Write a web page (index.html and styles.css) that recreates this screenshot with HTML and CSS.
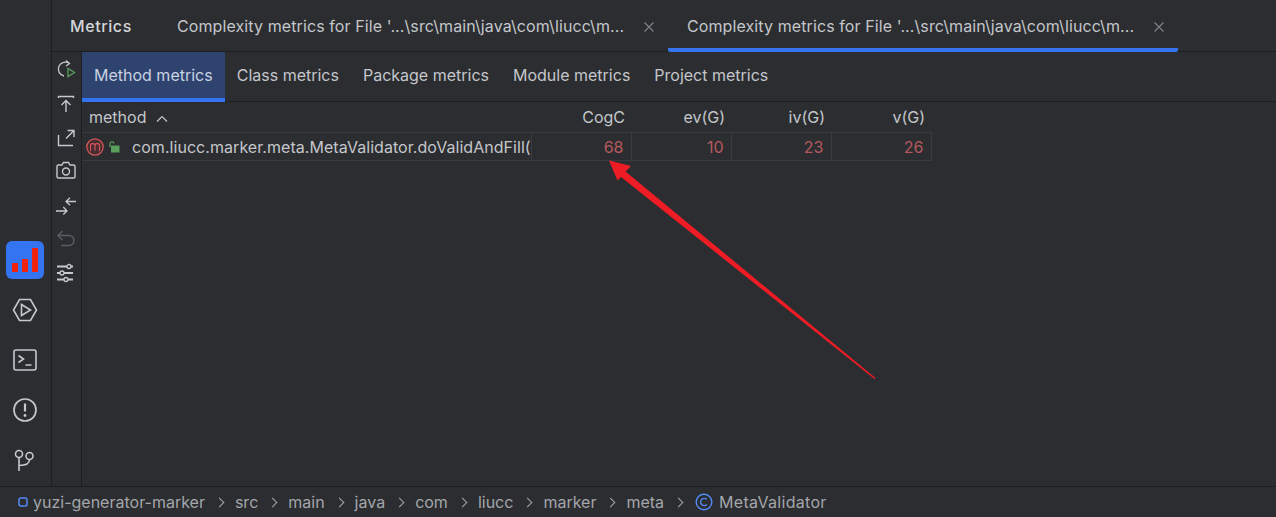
FILE: index.html
```html
<!DOCTYPE html>
<html lang="en">
<head>
<meta charset="utf-8">
<title>Metrics</title>
<link rel="stylesheet" href="styles.css">
</head>
<body>
<div class="main">
  <aside class="stripe">
    <div class="stripe-btn active">
      <svg width="38" height="38" viewBox="0 0 38 38"><rect x="6" y="22" width="6" height="9" fill="#f0230f"/><rect x="16" y="18" width="6" height="13" fill="#f0230f"/><rect x="26" y="7" width="6" height="24" fill="#f0230f"/></svg>
    </div>
    <div class="stripe-btn">
      <svg width="26" height="26" viewBox="0 0 26 26" class="ico"><path d="M7.500 2.500h11L24.500 13l-6 10.500h-11L1.500 13z" stroke-width="1.600"/><path d="M9.500 7.500v11l9-5.500z" stroke-width="1.600"/></svg>
    </div>
    <div class="stripe-btn">
      <svg width="26" height="26" viewBox="0 0 26 26" class="ico"><rect x="2" y="3" width="22" height="20" rx="2" stroke-width="1.600"/><path d="M6.500 8.500l5 3.500-5 3.500M13.500 18h6" stroke-width="1.600"/></svg>
    </div>
    <div class="stripe-btn">
      <svg width="26" height="26" viewBox="0 0 26 26" class="ico"><circle cx="13" cy="13" r="11" stroke-width="1.700"/><path d="M13 6.500v8" stroke-width="2.200"/><circle cx="13" cy="18.500" r="1.400" class="dot"/></svg>
    </div>
    <div class="stripe-btn">
      <svg width="26" height="26" viewBox="0 0 26 26" class="ico"><circle cx="7" cy="7" r="3.500" stroke-width="1.600"/><circle cx="17.500" cy="9" r="3.500" stroke-width="1.600"/><path d="M7 10.500V24M7 18.500c6 0 10.500-1 10.500-6" stroke-width="1.600"/></svg>
    </div>
  </aside>
  <section class="panel">
    <header class="tool-header">
      <div class="tool-title">Metrics</div>
      <div class="tool-tab">
        <span class="tool-tab-label">Complexity metrics for File '...\src\main\java\com\liucc\m...</span>
        <svg class="close" width="12" height="12" viewBox="0 0 12 12"><path d="M1.500 1.500l9 9M10.500 1.500l-9 9"/></svg>
      </div>
      <div class="tool-tab selected">
        <span class="tool-tab-label">Complexity metrics for File '...\src\main\java\com\liucc\m...</span>
        <svg class="close" width="12" height="12" viewBox="0 0 12 12"><path d="M1.500 1.500l9 9M10.500 1.500l-9 9"/></svg>
      </div>
    </header>
    <div class="panel-body">
      <nav class="toolbar">
        <svg width="22" height="22" viewBox="0 0 22 22" class="ico"><path d="M14.500 4.500A7 7 0 1 0 9 17M11 1.500l3.500 3-3.500 2.500" stroke-width="1.300"/><path d="M13 9.500v8l6.500-4z" stroke-width="1.300" class="green"/></svg>
        <svg width="22" height="22" viewBox="0 0 22 22" class="ico"><path d="M3.500 5V3.500h15V5M11 19V7.500M6.500 12l4.500-4.500 4.500 4.500" stroke-width="1.400"/></svg>
        <svg width="22" height="22" viewBox="0 0 22 22" class="ico"><path d="M3.500 8v10.500h14.500M11 11.500L19 3.500M12.500 3.500H19V10" stroke-width="1.400"/></svg>
        <svg width="22" height="22" viewBox="0 0 22 22" class="ico"><path d="M7 5l1.500-2.500h5L15 5h3.500a1.500 1.500 0 0 1 1.500 1.500v10a1.500 1.500 0 0 1-1.500 1.500h-15A1.500 1.500 0 0 1 2 16.500v-10A1.500 1.500 0 0 1 3.500 5z" stroke-width="1.400"/><circle cx="11" cy="11.500" r="3.500" stroke-width="1.400"/></svg>
        <svg width="22" height="22" viewBox="0 0 22 22" class="ico"><path d="M21 7.500H11M15 3.800L11 7.500l4 3.800M1 17h11M8.300 13l3.700 4-3.700 3.500" stroke-width="1.300"/></svg>
        <svg width="22" height="22" viewBox="0 0 22 22" class="ico dim"><path d="M7.500 3L3 7.500 7.500 12M3 7.500h11a5 5 0 0 1 0 10H6" stroke-width="1.400"/></svg>
        <svg width="22" height="22" viewBox="0 0 22 22" class="ico"><path d="M2 4.500h16M2 11h16M2 17.500h16" stroke-width="1.900"/><circle cx="14" cy="4.500" r="2" class="fillbg" stroke-width="1.300"/><circle cx="7" cy="11" r="2" class="fillbg" stroke-width="1.300"/><circle cx="11" cy="17.500" r="2" class="fillbg" stroke-width="1.300"/></svg>
      </nav>
      <div class="content">
        <div class="metric-tabs">
          <div class="metric-tab selected">Method metrics</div>
          <div class="metric-tab">Class metrics</div>
          <div class="metric-tab">Package metrics</div>
          <div class="metric-tab">Module metrics</div>
          <div class="metric-tab">Project metrics</div>
        </div>
        <table class="metrics">
          <thead>
            <tr>
              <th class="col-method">method <svg class="sort" width="14" height="9" viewBox="0 0 14 9"><path d="M2 7.500L7 2.500l5 5"/></svg></th>
              <th>CogC</th><th>ev(G)</th><th>iv(G)</th><th>v(G)</th>
            </tr>
          </thead>
          <tbody>
            <tr>
              <td class="col-method">
                <div class="method-cell">
                  <svg width="18" height="18" viewBox="0 0 18 18" class="m-icon"><circle cx="9" cy="9" r="8.200"/><path d="M4.500 13V7.500c0-2.500 4.500-2.500 4.500 0V12.500M9 7.500c0-2.500 4.500-2.500 4.500 0V13"/></svg>
                  <svg width="12" height="12" viewBox="0 0 12 12" class="lock"><rect x="3" y="4.500" width="8.500" height="7"/><path d="M2 6V2.800c0-2.500 3.500-2.500 4 -.3"/></svg>
                  <span class="method-name">com.liucc.marker.meta.MetaValidator.doValidAndFill(</span>
                </div>
              </td>
              <td class="num">68</td><td class="num">10</td><td class="num">23</td><td class="num">26</td>
            </tr>
          </tbody>
        </table>
      </div>
    </div>
  </section>
</div>
<footer class="crumbs">
  <svg width="10" height="10" viewBox="0 0 10 10" class="module"><rect x="1" y="1" width="8" height="8" rx="2"/></svg>
  <span>yuzi-generator-marker</span><i class="sep"></i>
  <span>src</span><i class="sep"></i>
  <span>main</span><i class="sep"></i>
  <span>java</span><i class="sep"></i>
  <span>com</span><i class="sep"></i>
  <span>liucc</span><i class="sep"></i>
  <span>marker</span><i class="sep"></i>
  <span>meta</span><i class="sep"></i>
  <svg width="18" height="18" viewBox="0 0 18 18" class="class-ico"><circle cx="9" cy="9" r="7.800"/><path d="M11.800 6.500a3.600 3.600 0 1 0 0 5"/></svg>
  <span class="class-name">MetaValidator</span>
</footer>
<svg class="arrow" width="1276" height="517" viewBox="0 0 1276 517"><polygon points="609,160.500 631,166 625.500,171.500 875.500,378 874.500,379 621,177 617.500,180.500"/></svg>
</body>
</html>
```

FILE: styles.css
```css
* { box-sizing: border-box; }
html, body { margin: 0; height: 100%; }
body {
  width: 1276px;
  height: 517px;
  overflow: hidden;
  background: #2b2d30;
  color: #c4c6cb;
  font-family: Inter, "Noto Sans", sans-serif;
  font-size: 16px;
  display: flex;
  flex-direction: column;
  position: relative;
}
.main { flex: 1; display: flex; min-height: 0; }
.ico { fill: none; stroke: #c6c8cd; }
.ico .dot { fill: #c6c8cd; stroke: none; }
.ico .green { stroke: #5c9e5e; }
.ico .fillbg { fill: #2b2d30; }
.ico.dim { stroke: #5a5d63; }

.stripe {
  width: 52px;
  border-right: 1px solid #1e1f22;
  display: flex;
  flex-direction: column;
  align-items: center;
  justify-content: flex-end;
  padding: 0 1px 7px 0;
  gap: 12px;
}
.stripe-btn {
  width: 38px;
  height: 38px;
  border-radius: 6px;
  display: flex;
  align-items: center;
  justify-content: center;
}
.stripe-btn.active { background: #3574f0; }

.panel { flex: 1; display: flex; flex-direction: column; min-width: 0; }
.tool-header {
  height: 52px;
  flex: none;
  display: flex;
  border-bottom: 1px solid #1e1f22;
}
.tool-title {
  width: 106px;
  padding: 16px 0 0 18px;
  font-weight: 500;
  color: #d5d7db;
  line-height: 20px;
  letter-spacing: .6px;
}
.tool-tab {
  width: 510px;
  display: flex;
  align-items: flex-start;
  padding: 16px 0 0 19px;
  gap: 16px;
  position: relative;
  line-height: 20px;
  margin-bottom: -1px;
}
.tool-tab-label { white-space: nowrap; width: 450px; overflow: hidden; letter-spacing: .1px; }
.close { fill: none; stroke: #7e8187; stroke-width: 1.200; margin-top: 5px; flex: none; }
.tool-tab.selected { border-bottom: 4px solid #3574f0; border-radius: 0 0 2px 2px; }

.panel-body { flex: 1; display: flex; min-height: 0; }
.toolbar {
  width: 30px;
  flex: none;
  border-right: 1px solid #1e1f22;
  display: flex;
  flex-direction: column;
  align-items: center;
  padding: 7px 2px 0 0;
  gap: 11.800px;
}
.content { flex: 1; min-width: 0; }
.metric-tabs {
  display: flex;
  height: 50px;
  border-bottom: 1px solid #1e1f22;
}
.metric-tab {
  padding: 13px 12px 0;
  line-height: 20px;
  white-space: nowrap;
}
.metric-tab.selected {
  background: #2e436e;
  border-bottom: 4px solid #3574f0;
  margin-bottom: -1px;
  color: #c9d2e3;
}
.metrics {
  border-collapse: collapse;
  table-layout: fixed;
  width: 849px;
}
.metrics th {
  font-weight: 400;
  height: 30px;
  text-align: right;
  padding: 1px 6px 0 0;
  width: 100px;
  line-height: 20px;
}
.metrics th.col-method { text-align: left; width: 449px; padding-left: 7px; }
.sort { fill: none; stroke: #c4c6cb; stroke-width: 1.200; margin-left: 4px; }
.metrics td {
  height: 28px;
  padding: 1px 7px 0 0;
  border: 1px solid #393b40;
  line-height: 20px;
}
.metrics td.col-method { border-left: 0; padding: 1px 0 0; }
.metrics td.num { text-align: right; color: #b6595e; }
.method-cell { display: flex; align-items: center; white-space: nowrap; overflow: hidden; padding-left: 4px; }
.m-icon { fill: #4a2d30; stroke: #d9585c; stroke-width: 1.200; flex: none; }
.m-icon path { fill: none; stroke-width: 1.100; }
.lock { fill: none; stroke: #58a05a; stroke-width: 1.200; flex: none; margin-left: 4px; }
.lock rect { fill: #58a05a; stroke: none; }
.method-name { margin-left: 12px; letter-spacing: .05px; }

.crumbs {
  height: 31px;
  flex: none;
  border-top: 1px solid #1e1f22;
  display: flex;
  align-items: center;
  padding: 0 0 0 18px;
  color: #a4a6ab;
  white-space: nowrap;
}
.module { fill: none; stroke: #548af7; stroke-width: 1.500; margin-right: 5px; }
.sep {
  width: 7px;
  height: 7px;
  border-top: 1.300px solid #a4a6ab;
  border-right: 1.300px solid #a4a6ab;
  transform: rotate(45deg);
  margin: 0 12px 0 11px;
}
.class-ico { fill: none; stroke: #548af7; stroke-width: 1.400; margin: 0 6px 0 1px; }
.class-name { letter-spacing: .3px; }

.arrow { position: absolute; left: 0; top: 0; pointer-events: none; }
.arrow polygon { fill: #ee1c25; }
```
